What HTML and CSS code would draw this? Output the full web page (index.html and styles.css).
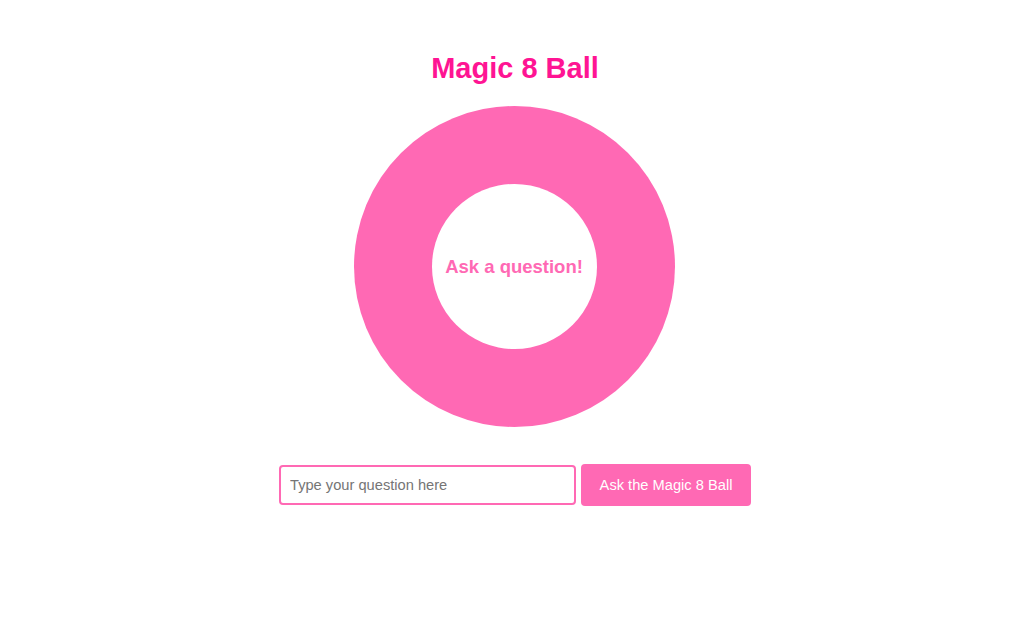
FILE: index.html
```html
<!DOCTYPE html>
<html>
<head>
<meta charset="utf-8">
<title>Magic 8 Ball</title>
<link rel="stylesheet" href="styles.css">
</head>
<body>
<main class="app">
  <h1 class="title">Magic 8 Ball</h1>
  <div class="ball">
    <div class="window">
      <span class="answer">Ask a question!</span>
    </div>
  </div>
  <form class="ask" onsubmit="return false">
    <input class="question" type="text" placeholder="Type your question here">
    <button class="ask-btn" type="submit">Ask the Magic 8 Ball</button>
  </form>
</main>
</body>
</html>
```
FILE: styles.css
```css
html, body {
  margin: 0;
  padding: 0;
  background: #ffffff;
}

body {
  font-family: "Liberation Sans", Arial, sans-serif;
}

.app {
  display: flex;
  flex-direction: column;
  align-items: center;
  padding-left: 6px;
}

.title {
  margin: 52px 0 21px;
  font-size: 29px;
  font-weight: bold;
  color: #ff1493;
  line-height: 33px;
}

.ball {
  width: 321px;
  height: 321px;
  margin-right: 2px;
  border-radius: 50%;
  background: #ff69b4;
  display: flex;
  align-items: center;
  justify-content: center;
}

.window {
  width: 165px;
  height: 165px;
  border-radius: 50%;
  background: #ffffff;
  display: flex;
  align-items: center;
  justify-content: center;
}

.answer {
  color: #ff69b4;
  font-size: 18.5px;
  font-weight: bold;
}

.ask {
  margin-top: 37px;
  display: flex;
  align-items: center;
  gap: 5px;
}

.question {
  box-sizing: border-box;
  width: 297px;
  height: 40px;
  border: 2px solid #ff69b4;
  border-radius: 4px;
  padding: 0 9px;
  font-family: "Liberation Sans", Arial, sans-serif;
  font-size: 14.67px;
  color: #333;
  outline: none;
}

.question::placeholder {
  color: #757575;
}

.ask-btn {
  box-sizing: border-box;
  width: 170px;
  height: 42px;
  border: none;
  border-radius: 4px;
  background: #ff69b4;
  color: #ffffff;
  font-family: "Liberation Sans", Arial, sans-serif;
  font-size: 14.67px;
  padding: 0 18px;
  cursor: pointer;
}
```
